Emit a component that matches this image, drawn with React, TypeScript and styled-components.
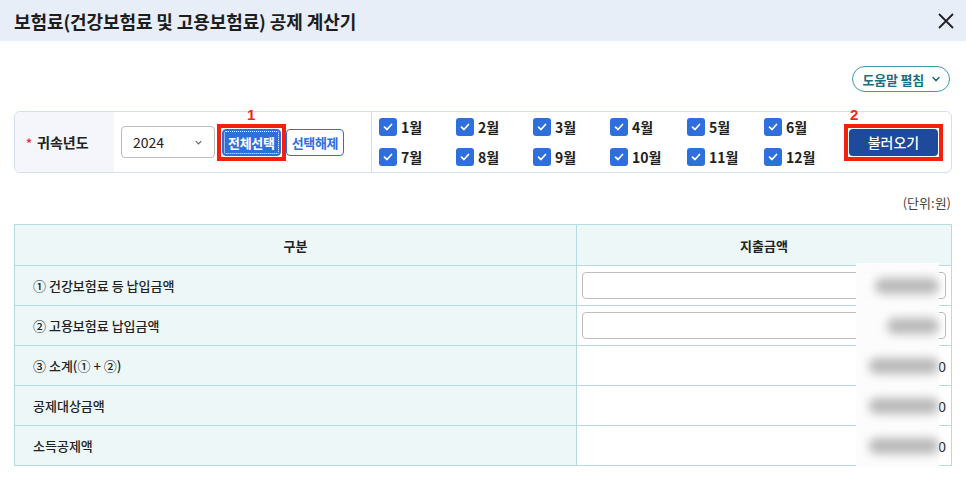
import styled, { createGlobalStyle } from 'styled-components'

const GlobalStyle = createGlobalStyle`
  html, body {
    margin: 0;
    padding: 0;
    background: #fff;
    font-family: 'Noto Sans CJK KR', 'Noto Sans', sans-serif;
    color: #222;
  }
  * { box-sizing: border-box; }
`

const Page = styled.div`
  width: 966px;
  height: 482px;
  overflow: hidden;
`

const Header = styled.header`
  height: 41px;
  background: #e8eef8;
  display: flex;
  align-items: center;
  justify-content: space-between;
  padding: 0 8px 0 14px;
`

const Title = styled.h1`
  margin: 0;
  font-size: 18px;
  font-weight: 700;
  letter-spacing: -0.1px;
  color: #1d1d1d;
`

const CloseButton = styled.button`
  border: 0;
  background: none;
  padding: 0;
  width: 24px;
  height: 24px;
  display: flex;
  align-items: center;
  justify-content: center;
`

const Body = styled.div`
  padding: 25px 14px 0 14px;
`

const HelpRow = styled.div`
  display: flex;
  justify-content: flex-end;
  padding-right: 2px;
`

const HelpButton = styled.button`
  height: 26px;
  padding: 0 8px 0 9px;
  border: 1px solid #3d9aab;
  border-radius: 13px;
  background: #fff;
  color: #1c6f7e;
  font-family: inherit;
  font-size: 13px;
  font-weight: 700;
  letter-spacing: -0.2px;
  display: flex;
  align-items: center;
  gap: 7px;
`

const FilterBox = styled.div`
  margin-top: 19px;
  height: 62px;
  border: 1px solid #d3e0f3;
  border-radius: 6px;
  display: flex;
  align-items: stretch;
`

const LabelCell = styled.div`
  width: 99px;
  background: #f4f6fb;
  border-radius: 6px 0 0 6px;
  display: flex;
  align-items: center;
  padding-left: 11px;
  font-size: 14px;
  font-weight: 700;
  color: #222;
`

const Required = styled.span`
  color: #e0323a;
  margin-right: 5px;
  font-size: 12px;
`

const YearCell = styled.div`
  display: flex;
  align-items: center;
  padding-left: 7px;
  width: 258px;
  border-right: 1px solid #d3e0f3;
`

const Select = styled.div`
  width: 94px;
  height: 32px;
  border: 1px solid #bdbdbd;
  border-radius: 4px;
  display: flex;
  align-items: center;
  justify-content: space-between;
  padding: 0 11px;
  font-size: 14px;
  color: #222;
  margin-right: 2px;
`

const Marked = styled.div`
  position: relative;
  border: 4px solid #f3200f;
  padding: 1px;
  display: flex;
`

const MarkNumber = styled.span<{ $left: number }>`
  position: absolute;
  top: -22px;
  left: ${(p) => p.$left}px;
  color: #ef2a10;
  font-size: 15px;
  font-weight: 700;
  font-family: 'Liberation Sans', Arial, sans-serif;
`

const SmallButton = styled.button<{ $filled?: boolean }>`
  height: 27px;
  padding: 0 5px;
  border-radius: 4px;
  border: 1px solid #2f6fdc;
  background: ${(p) => (p.$filled ? '#2f6fdc' : '#fff')};
  color: ${(p) => (p.$filled ? '#fff' : '#2f6fdc')};
  font-family: inherit;
  font-size: 13px;
  font-weight: 700;
  letter-spacing: -0.3px;
  outline: ${(p) => (p.$filled ? '1px dotted #fff' : 'none')};
  outline-offset: -3px;
`

const MonthGrid = styled.div`
  display: grid;
  grid-template-columns: repeat(6, 77px);
  grid-template-rows: 30px 30px;
  align-content: center;
  padding-left: 7px;
`

const Month = styled.label`
  display: flex;
  align-items: center;
  gap: 4px;
  font-size: 14px;
  font-weight: 700;
  color: #222;
`

const Check = styled.span`
  width: 18px;
  height: 18px;
  border-radius: 3px;
  background: #2f6fdc;
  display: flex;
  align-items: center;
  justify-content: center;
`

const LoadCell = styled.div`
  flex: 1;
  display: flex;
  align-items: center;
  justify-content: flex-end;
  padding-right: 8px;
`

const LoadButton = styled.button`
  width: 89px;
  height: 27px;
  border: 0;
  border-radius: 4px;
  background: #1e4a9c;
  color: #fff;
  font-family: inherit;
  font-size: 14px;
  font-weight: 500;
`

const Unit = styled.div`
  text-align: right;
  font-size: 13px;
  color: #444;
  margin-top: 20px;
  padding-right: 1px;
`

const Table = styled.div`
  position: relative;
  margin-top: 12px;
  border: 1px solid #b9dbe0;
  display: grid;
  grid-template-columns: 561px 1fr;
`

const HeadCell = styled.div<{ $last?: boolean }>`
  height: 40px;
  background: #edf7f7;
  display: flex;
  align-items: center;
  justify-content: center;
  font-size: 13px;
  font-weight: 700;
  color: #222;
  border-left: ${(p) => (p.$last ? '1px solid #b9dbe0' : '0')};
`

const RowLabel = styled.div`
  height: 40px;
  background: #edf7f7;
  border-top: 1px solid #b9dbe0;
  display: flex;
  align-items: center;
  padding-left: 18px;
  font-size: 13px;
  font-weight: 500;
  color: #222;
`

const RowValue = styled.div`
  height: 40px;
  border-top: 1px solid #b9dbe0;
  border-left: 1px solid #b9dbe0;
  display: flex;
  align-items: center;
  justify-content: flex-end;
  padding: 0 5px;
  font-size: 14px;
  color: #222;
`

const AmountInput = styled.div`
  width: 100%;
  height: 27px;
  border: 1px solid #bcbcbc;
  border-radius: 4px;
  background: #fff;
`

const Blur = styled.div`
  position: absolute;
  left: 841px;
  top: 38px;
  width: 83px;
  height: 204px;
  background: rgba(252, 252, 252, 0.97);
  display: flex;
  flex-direction: column;
  align-items: flex-end;
  padding-top: 3px;
`

const BlurValue = styled.div<{ $w: number }>`
  width: ${(p) => p.$w}px;
  height: 40px;
  display: flex;
  align-items: center;
  justify-content: flex-end;
  &::before {
    content: '';
    display: block;
    width: 100%;
    height: 16px;
    border-radius: 8px;
    background: #b9b9b9;
    filter: blur(5px);
  }
`

const months = ['1월', '2월', '3월', '4월', '5월', '6월', '7월', '8월', '9월', '10월', '11월', '12월']

const rows = [
  { label: '① 건강보험료 등 납입금액', input: true },
  { label: '② 고용보험료 납입금액', input: true },
  { label: '③ 소계(① + ②)', input: false },
  { label: '공제대상금액', input: false },
  { label: '소득공제액', input: false },
]

const CheckIcon = () => (
  <svg width="12" height="12" viewBox="0 0 12 12" fill="none">
    <path d="M2.5 6.2 L5 8.5 L9.5 3.5" stroke="#fff" strokeWidth="1.7" strokeLinecap="round" strokeLinejoin="round" />
  </svg>
)

export default function App() {
  return (
    <Page>
      <GlobalStyle />
      <Header>
        <Title>보험료(건강보험료 및 고용보험료) 공제 계산기</Title>
        <CloseButton aria-label="닫기">
          <svg width="18" height="18" viewBox="0 0 18 18">
            <path d="M2 2 L16 16 M16 2 L2 16" stroke="#222" strokeWidth="1.8" />
          </svg>
        </CloseButton>
      </Header>
      <Body>
        <HelpRow>
          <HelpButton>
            도움말 펼침
            <svg width="10" height="10" viewBox="0 0 10 10">
              <path d="M2 3.5 L5 6.5 L8 3.5" stroke="#1c6f7e" strokeWidth="1.6" fill="none" strokeLinecap="round" />
            </svg>
          </HelpButton>
        </HelpRow>

        <FilterBox>
          <LabelCell>
            <Required>*</Required>귀속년도
          </LabelCell>
          <YearCell>
            <Select>
              2024
              <svg width="9" height="9" viewBox="0 0 10 10">
                <path d="M2 3.5 L5 6.5 L8 3.5" stroke="#666" strokeWidth="1.3" fill="none" />
              </svg>
            </Select>
            <Marked>
              <MarkNumber $left={26}>1</MarkNumber>
              <SmallButton $filled>전체선택</SmallButton>
            </Marked>
            <SmallButton>선택해제</SmallButton>
          </YearCell>
          <MonthGrid>
            {months.map((m) => (
              <Month key={m}>
                <Check>
                  <CheckIcon />
                </Check>
                {m}
              </Month>
            ))}
          </MonthGrid>
          <LoadCell>
            <Marked>
              <MarkNumber $left={2}>2</MarkNumber>
              <LoadButton>불러오기</LoadButton>
            </Marked>
          </LoadCell>
        </FilterBox>

        <Unit>(단위:원)</Unit>

        <Table>
          <HeadCell>구분</HeadCell>
          <HeadCell $last>지출금액</HeadCell>
          {rows.map((r) => [
            <RowLabel key={r.label}>{r.label}</RowLabel>,
            <RowValue key={r.label + '-v'}>{r.input ? <AmountInput /> : '0'}</RowValue>,
          ])}
          <Blur>
            <BlurValue $w={64} />
            <BlurValue $w={52} />
            <BlurValue $w={70} />
            <BlurValue $w={70} />
            <BlurValue $w={70} />
          </Blur>
        </Table>
      </Body>
    </Page>
  )
}
